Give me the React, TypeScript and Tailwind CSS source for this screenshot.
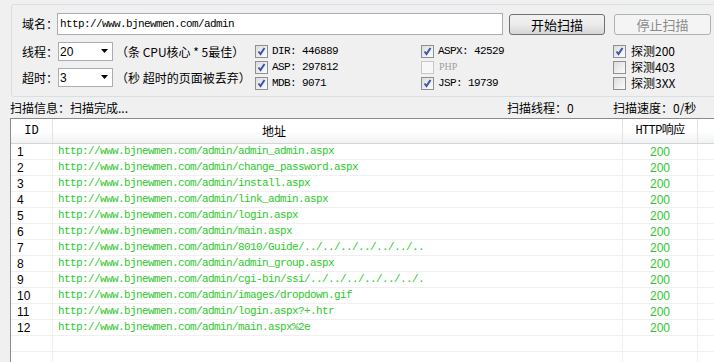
import React from "react";

const mono = "font-['Liberation_Mono','Noto_Sans_CJK_SC',monospace] text-[11px] tracking-[-0.6px]";

function Check({ checked, disabled }: { checked?: boolean; disabled?: boolean }) {
  return (
    <span
      className={
        disabled
          ? "w-[13px] h-[13px] border border-[#c8c8c8] bg-[#f7f7f7] flex items-center justify-center shrink-0"
          : "w-[13px] h-[13px] border border-[#8e8f8f] bg-gradient-to-br from-[#dcdcdc] to-[#fcfcfc] flex items-center justify-center shrink-0"
      }
    >
      {checked && (
        <svg width="11" height="11" viewBox="0 0 11 11">
          <path d="M2.5 5.5 L4.5 8 L8.5 2" fill="none" stroke="#3a58a8" strokeWidth="2" />
        </svg>
      )}
    </span>
  );
}

function CheckItem({ label, checked, disabled }: { label: string; checked?: boolean; disabled?: boolean }) {
  return (
    <div className="h-[16px] flex items-center">
      <Check checked={checked} disabled={disabled} />
      <span
        className={
          disabled
            ? "ml-[5px] font-['Liberation_Serif',serif] text-[10px] text-[#a0a0a0] leading-none"
            : "ml-[4px] font-['Liberation_Mono','Noto_Sans_CJK_SC',monospace] text-[11px] tracking-[-0.6px] leading-none whitespace-nowrap"
        }
      >
        {label}
      </span>
    </div>
  );
}

function CheckItemCJK({ label, checked }: { label: string; checked?: boolean }) {
  return (
    <div className="h-[16px] flex items-center">
      <Check checked={checked} />
      <span className="ml-[5px] text-[12px] leading-none whitespace-nowrap">{label}</span>
    </div>
  );
}

function Select({ value }: { value: string }) {
  return (
    <div className="w-[55px] h-[19px] bg-white border border-[#abadb3] flex items-center justify-between pl-[1px] pr-[3px] shrink-0">
      <span className="font-['Liberation_Sans',sans-serif] text-[12px] leading-none">{value}</span>
      <svg width="8" height="5" viewBox="0 0 8 5">
        <path d="M0 0 H7 L3.5 4 Z" fill="#000" />
      </svg>
    </div>
  );
}

const rows = [
  "http://www.bjnewmen.com/admin/admin_admin.aspx",
  "http://www.bjnewmen.com/admin/change_password.aspx",
  "http://www.bjnewmen.com/admin/install.aspx",
  "http://www.bjnewmen.com/admin/link_admin.aspx",
  "http://www.bjnewmen.com/admin/login.aspx",
  "http://www.bjnewmen.com/admin/main.aspx",
  "http://www.bjnewmen.com/admin/8010/Guide/../../../../../../..",
  "http://www.bjnewmen.com/admin/admin_group.aspx",
  "http://www.bjnewmen.com/admin/cgi-bin/ssi/../../../../../../.",
  "http://www.bjnewmen.com/admin/images/dropdown.gif",
  "http://www.bjnewmen.com/admin/login.aspx?+.htr",
  "http://www.bjnewmen.com/admin/main.aspx%2e",
];

export default function App() {
  return (
    <div className="w-[714px] h-[362px] bg-[#f0f0f0] overflow-hidden flex flex-col font-['Noto_Sans_CJK_SC',sans-serif] text-[12px] text-black">
      {/* Group box */}
      <div className="ml-[11px] mt-[4px] w-[720px] h-[93px] shrink-0 border border-[#d5dfe5] rounded-[3px] pt-[8px] pl-[10px]">
        <div className="flex items-center h-[22px]">
          <span className="w-[35px] shrink-0 leading-none whitespace-nowrap">域名：</span>
          <div className={`w-[446px] h-[22px] shrink-0 bg-white border border-[#abadb3] flex items-center pl-[2px] ${mono}`}>
            http://www.bjnewmen.com/admin
          </div>
          <div className="ml-[6px] w-[96px] h-[21px] shrink-0 border border-[#707070] rounded-[3px] bg-gradient-to-b from-[#f2f2f2] via-[#ebebeb] to-[#d6d6d6] flex items-center justify-center leading-none text-[13px]">
            开始扫描
          </div>
          <div className="ml-[9px] w-[97px] h-[21px] shrink-0 border border-[#adb2b5] rounded-[3px] bg-[#f4f4f4] flex items-center justify-center leading-none text-[13px] text-[#8a8a8a]">
            停止扫描
          </div>
        </div>
        <div className="flex mt-[7px]">
          <div className="w-[233px] shrink-0 flex flex-col gap-[7px]">
            <div className="flex items-center h-[19px]">
              <span className="w-[36px] shrink-0 leading-none whitespace-nowrap">线程：</span>
              <Select value="20" />
              <span className="ml-[3px] leading-none whitespace-nowrap">（条 CPU核心 * 5最佳）</span>
            </div>
            <div className="flex items-center h-[19px]">
              <span className="w-[36px] shrink-0 leading-none whitespace-nowrap">超时：</span>
              <Select value="3" />
              <span className="ml-[3px] leading-none whitespace-nowrap">（秒 超时的页面被丢弃）</span>
            </div>
          </div>
          <div className="w-[166px] shrink-0 mt-[1px] flex flex-col">
            <CheckItem label="DIR: 446889" checked />
            <CheckItem label="ASP: 297812" checked />
            <CheckItem label="MDB: 9071" checked />
          </div>
          <div className="w-[192px] shrink-0 mt-[1px] flex flex-col">
            <CheckItem label="ASPX: 42529" checked />
            <CheckItem label="PHP" disabled />
            <CheckItem label="JSP: 19739" checked />
          </div>
          <div className="mt-[1px] flex flex-col">
            <CheckItemCJK label="探测200" checked />
            <CheckItemCJK label="探测403" />
            <CheckItemCJK label="探测3XX" />
          </div>
        </div>
      </div>

      {/* Status line */}
      <div className="h-[21px] shrink-0 flex items-center pl-[10px] leading-none whitespace-nowrap">
        <span className="w-[497px] shrink-0">扫描信息：扫描完成...</span>
        <span className="w-[106px] shrink-0">扫描线程：0</span>
        <span>扫描速度：0/秒</span>
      </div>

      {/* Table */}
      <div className="ml-[10px] flex-1 bg-white border-t border-l border-[#8c8c8c] flex flex-col">
        <div className="h-[25px] shrink-0 flex border-b border-[#d5d5d5] bg-gradient-to-b from-white from-50% to-[#f1f2f4]">
          <div className="w-[42px] shrink-0 border-r border-[#e3e3e3] flex items-center justify-center font-['Liberation_Mono',monospace] text-[12px]">ID</div>
          <div className="w-[570px] shrink-0 border-r border-[#e3e3e3] flex items-center pl-[209px] text-[12px]">地址</div>
          <div className="w-[75px] shrink-0 border-r border-[#e3e3e3] flex items-center justify-center text-[12px] font-['Liberation_Mono','Noto_Sans_CJK_SC',monospace] tracking-[-0.6px] whitespace-nowrap">HTTP响应</div>
          <div className="flex-1" />
        </div>
        {rows.map((url, i) => (
          <div key={i} className="h-[16px] shrink-0 flex border-b border-[#f0f0f0]">
            <div className="w-[42px] shrink-0 border-r border-[#f0f0f0] flex items-center pl-[6px] font-['Liberation_Sans',sans-serif] text-[12px] leading-none">
              {i + 1}
            </div>
            <div className={`w-[570px] shrink-0 border-r border-[#f0f0f0] flex items-center pl-[5px] text-[#2ec82e] leading-none whitespace-nowrap overflow-hidden ${mono}`}>
              {url}
            </div>
            <div className="w-[75px] shrink-0 border-r border-[#f0f0f0] flex items-center justify-center font-['Liberation_Sans',sans-serif] text-[12px] text-[#2ec82e] leading-none">
              200
            </div>
            <div className="flex-1" />
          </div>
        ))}
        {[0, 1].map((i) => (
          <div key={"e" + i} className="h-[16px] shrink-0 flex border-b border-[#f0f0f0]">
            <div className="w-[42px] shrink-0 border-r border-[#f0f0f0]" />
            <div className="w-[570px] shrink-0 border-r border-[#f0f0f0]" />
            <div className="w-[75px] shrink-0 border-r border-[#f0f0f0]" />
            <div className="flex-1" />
          </div>
        ))}
      </div>
    </div>
  );
}
